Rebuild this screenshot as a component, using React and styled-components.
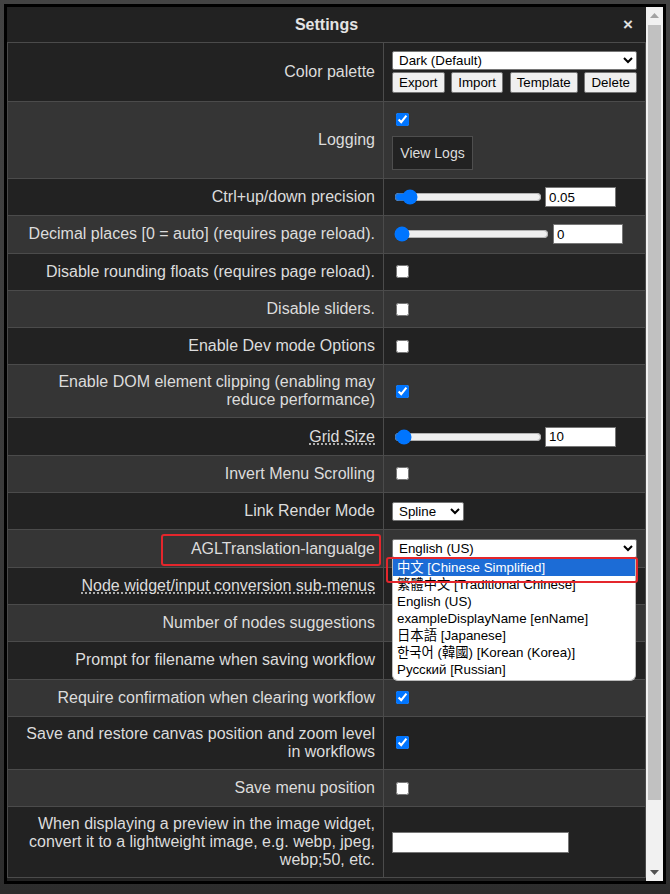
import React from 'react';
import styled, { createGlobalStyle } from 'styled-components';

const GlobalStyle = createGlobalStyle`
  html, body {
    margin: 0;
    padding: 0;
    background: #383838;
  }
  body {
    font-family: "Liberation Sans", Arial, sans-serif;
  }
`;

const Page = styled.div`
  width: 670px;
  height: 894px;
  box-sizing: border-box;
  padding: 4px 0 0 4px;
  background: linear-gradient(180deg, #434343 0%, #3a3a3a 60%, #2c2c2c 100%);
`;

const Dialog = styled.div`
  width: 662px;
  height: 880px;
  box-sizing: border-box;
  border: 3px solid #000;
  background: #222;
  display: flex;
  overflow: hidden;
`;

const Content = styled.div`
  flex: 1;
  min-width: 0;
  overflow: hidden;
  color: #ddd;
`;

const Header = styled.div`
  display: grid;
  grid-template-columns: 1fr auto 1fr;
  align-items: center;
  height: 35px;
  font-size: 16px;
  font-weight: bold;
  color: #e4e4e4;
`;

const Title = styled.div`
  grid-column: 2;
`;

const Close = styled.button`
  justify-self: end;
  background: none;
  border: 0;
  padding: 0 13px 0 0;
  color: #e0e0e0;
  font: bold 17px "Liberation Sans", Arial, sans-serif;
  cursor: pointer;
`;

const Table = styled.div`
  border: 1px solid #4b4b4b;
  border-bottom: none;
`;

const Row = styled.div`
  position: relative;
  z-index: ${p => (p.$top ? 2 : 'auto')};
  display: grid;
  grid-template-columns: 376px 1fr;
  min-height: 37.3px;
  box-sizing: border-box;
  background: ${p => (p.$alt ? '#353535' : '#222')};
  border-bottom: 1px solid #4b4b4b;
`;

const Label = styled.div`
  box-sizing: border-box;
  border-right: 1px solid #4b4b4b;
  padding: 8px;
  display: flex;
  align-items: center;
  justify-content: flex-end;
  text-align: right;
  font-size: 16px;
  line-height: 18px;
  color: #dcdcdc;
`;

const LabelText = styled.span`
  position: relative;
  text-decoration: ${p => (p.$tip ? 'underline dotted' : 'none')};
  text-underline-offset: 2px;
`;

const Value = styled.div`
  padding: 8px;
  display: flex;
  flex-direction: ${p => (p.$column ? 'column' : 'row')};
  align-items: ${p => (p.$column ? 'stretch' : 'center')};
  justify-content: ${p => (p.$column ? 'center' : 'flex-start')};
  gap: ${p => (p.$column ? '2px' : '0')};
  position: relative;
`;

const Select = styled.select`
  font: 13.33px "Liberation Sans", Arial, sans-serif;
  width: ${p => p.$width || 'auto'};
  height: 19px;
  background: #fff;
  color: #000;
  border: 1px solid #767676;
  border-radius: 2px;
  padding: 0 2px;
`;

const ButtonBar = styled.div`
  display: flex;
  justify-content: space-between;
`;

const LightButton = styled.button`
  font: 13.33px "Liberation Sans", Arial, sans-serif;
  height: 21px;
  padding: 0 6px;
  background: #efefef;
  color: #000;
  border: 1px solid #767676;
  border-radius: 2px;
`;

const CheckLine = styled.div`
  display: flex;
  height: 19px;
  align-items: center;
`;

const DarkButton = styled.button`
  font: 14px "Liberation Sans", Arial, sans-serif;
  align-self: flex-start;
  margin-top: 5px;
  height: 34px;
  width: 81px;
  padding: 0;
  background: #222;
  color: #ddd;
  border: 1px solid #4e4e4e;
`;

const Check = styled.input`
  width: 13px;
  height: 13px;
  margin: 3px 3px 3px 4px;
  accent-color: #0075ff;
`;

const Range = styled.input`
  width: ${p => p.$width}px;
  height: 16px;
  margin: 2px;
  accent-color: #0075ff;
`;

const NumberBox = styled.input`
  font: 13.33px "Liberation Sans", Arial, sans-serif;
  width: ${p => p.$width}px;
  height: 20px;
  box-sizing: border-box;
  margin-left: ${p => p.$gap}px;
  padding: 1px 3px;
  border: 1px solid #767676;
  background: #fff;
  color: #000;
`;

const TextBox = styled.input`
  font: 13.33px "Liberation Sans", Arial, sans-serif;
  width: 177px;
  height: 21px;
  box-sizing: border-box;
  border: 1px solid #767676;
  background: #fff;
`;

const SelectWrap = styled.div`
  position: relative;
  display: flex;
  flex-direction: column;
`;

const Popup = styled.div`
  position: absolute;
  top: 100%;
  left: 0;
  width: 244px;
  box-sizing: border-box;
  margin-top: 0;
  padding: 1px 0 2px;
  background: #fff;
  border: 1px solid #bcbcbc;
  border-top: none;
  border-radius: 0 0 6px 6px;
  z-index: 3;
`;

const Option = styled.div`
  font: 13.33px "Liberation Sans", Arial, "Noto Sans CJK SC", "Noto Sans CJK KR", sans-serif;
  line-height: 17px;
  padding: 0 4px;
  white-space: nowrap;
  background: ${p => (p.$active ? '#1c6cd6' : 'transparent')};
  color: ${p => (p.$active ? '#fff' : '#000')};
`;

const Marker = styled.div`
  position: absolute;
  box-sizing: border-box;
  border: 2px solid #e4262c;
  border-radius: 3px;
  pointer-events: none;
  z-index: 4;
`;

const LabelMarker = styled(Marker)`
  left: -30px;
  right: -6px;
  top: -6px;
  bottom: -8px;
`;

const OptionMarker = styled(Marker)`
  left: -6px;
  top: calc(100% - 1px);
  width: 252px;
  height: 26px;
`;

const Scrollbar = styled.div`
  width: 17px;
  flex: none;
  background: #f1f1f1;
  display: flex;
  flex-direction: column;
`;

const ScrollArrow = styled.div`
  height: 17px;
  flex: none;
  display: flex;
  align-items: center;
  justify-content: center;
`;

const Thumb = styled.div`
  height: 775px;
  margin: 1px 2px 0;
  background: #c1c1c1;
`;

const Track = styled.div`
  flex: 1;
`;

const languages = [
  '中文 [Chinese Simplified]',
  '繁體中文 [Traditional Chinese]',
  'English (US)',
  'exampleDisplayName [enName]',
  '日本語 [Japanese]',
  '한국어 (韓國) [Korean (Korea)]',
  'Русский [Russian]',
];

const rows = [
  { label: 'Color palette', kind: 'palette' },
  { label: 'Logging', kind: 'logging' },
  { label: 'Ctrl+up/down precision', kind: 'slider', min: 0, max: 1, step: 0.01, pos: 0.06, text: '0.05', range: 148, box: 71, gap: 1 },
  { label: 'Decimal places [0 = auto] (requires page reload).', kind: 'slider', min: 0, max: 6, step: 1, pos: 0, text: '0', range: 155, box: 70, gap: 2 },
  { label: 'Disable rounding floats (requires page reload).', kind: 'check' },
  { label: 'Disable sliders.', kind: 'check' },
  { label: 'Enable Dev mode Options', kind: 'check' },
  { label: 'Enable DOM element clipping (enabling may reduce performance)', kind: 'check', checked: true },
  { label: 'Grid Size', tip: true, kind: 'slider', min: 1, max: 500, step: 1, pos: 10, text: '10', range: 148, box: 71, gap: 1 },
  { label: 'Invert Menu Scrolling', kind: 'check' },
  { label: 'Link Render Mode', kind: 'combo', options: ['Spline', 'Linear', 'Straight', 'Hidden'] },
  { label: 'AGLTranslation-langualge', kind: 'language', marked: true },
  { label: 'Node widget/input conversion sub-menus', tip: true, kind: 'check', checked: true },
  { label: 'Number of nodes suggestions', kind: 'slider', min: 1, max: 100, step: 1, pos: 5, text: '5', range: 148, box: 71, gap: 1 },
  { label: 'Prompt for filename when saving workflow', kind: 'check', checked: true },
  { label: 'Require confirmation when clearing workflow', kind: 'check', checked: true },
  { label: 'Save and restore canvas position and zoom level in workflows', kind: 'check', checked: true },
  { label: 'Save menu position', kind: 'check' },
  { label: 'When displaying a preview in the image widget, convert it to a lightweight image, e.g. webp, jpeg, webp;50, etc.', kind: 'text' },
];

function SettingValue({ row }) {
  switch (row.kind) {
    case 'palette':
      return (
        <Value $column>
          <Select $width="100%" defaultValue="dark">
            <option value="dark">Dark (Default)</option>
            <option value="light">Light</option>
          </Select>
          <ButtonBar>
            <LightButton>Export</LightButton>
            <LightButton>Import</LightButton>
            <LightButton>Template</LightButton>
            <LightButton>Delete</LightButton>
          </ButtonBar>
        </Value>
      );
    case 'logging':
      return (
        <Value $column>
          <CheckLine>
            <Check type="checkbox" defaultChecked />
          </CheckLine>
          <DarkButton>View Logs</DarkButton>
        </Value>
      );
    case 'slider':
      return (
        <Value>
          <Range
            type="range"
            $width={row.range}
            min={row.min}
            max={row.max}
            step={row.step}
            defaultValue={row.pos}
          />
          <NumberBox type="text" $width={row.box} $gap={row.gap} defaultValue={row.text} />
        </Value>
      );
    case 'combo':
      return (
        <Value>
          <Select defaultValue={row.options[0]}>
            {row.options.map(o => (
              <option key={o}>{o}</option>
            ))}
          </Select>
        </Value>
      );
    case 'language':
      return (
        <Value $column>
          <SelectWrap>
            <Select $width="100%" defaultValue="English (US)">
              {languages.map(l => (
                <option key={l}>{l}</option>
              ))}
            </Select>
            <Popup>
              {languages.map((l, i) => (
                <Option key={l} $active={i === 0}>{l}</Option>
              ))}
            </Popup>
            <OptionMarker />
          </SelectWrap>
        </Value>
      );
    case 'text':
      return (
        <Value>
          <TextBox type="text" />
        </Value>
      );
    default:
      return (
        <Value>
          <Check type="checkbox" defaultChecked={!!row.checked} />
        </Value>
      );
  }
}

function ScrollUp() {
  return (
    <svg width="9" height="5" viewBox="0 0 9 5">
      <path d="M0 5 L4.5 0 L9 5 Z" fill="#a3a3a3" />
    </svg>
  );
}

function ScrollDown() {
  return (
    <svg width="9" height="5" viewBox="0 0 9 5">
      <path d="M0 0 L9 0 L4.5 5 Z" fill="#505050" />
    </svg>
  );
}

export default function App() {
  return (
    <Page>
      <GlobalStyle />
      <Dialog>
        <Content>
          <Header>
            <Title>Settings</Title>
            <Close>×</Close>
          </Header>
          <Table>
            {rows.map((row, i) => (
              <Row key={row.label} $alt={i % 2 === 1} $top={row.marked}>
                <Label>
                  <LabelText $tip={row.tip}>
                    {row.label}
                    {row.marked && <LabelMarker />}
                  </LabelText>
                </Label>
                <SettingValue row={row} />
              </Row>
            ))}
          </Table>
        </Content>
        <Scrollbar>
          <ScrollArrow>
            <ScrollUp />
          </ScrollArrow>
          <Thumb />
          <Track />
          <ScrollArrow>
            <ScrollDown />
          </ScrollArrow>
        </Scrollbar>
      </Dialog>
    </Page>
  );
}
